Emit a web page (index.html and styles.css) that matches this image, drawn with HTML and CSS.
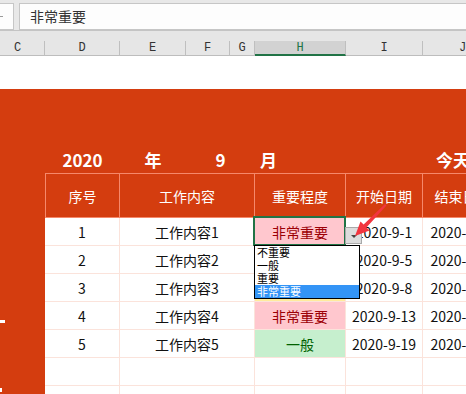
FILE: index.html
```html
<!DOCTYPE html>
<html lang="zh-CN">
<head>
<meta charset="utf-8">
<title>Sheet</title>
<link rel="stylesheet" href="styles.css">
</head>
<body>
  <div class="formula-bar">
    <div class="namebox"><span class="namebox-mark"></span></div>
    <div class="fx-input">非常重要</div>
  </div>
  <div class="col-band">
    <div class="col-head c-c">C</div>
    <div class="col-head c-d">D</div>
    <div class="col-head c-e">E</div>
    <div class="col-head c-f">F</div>
    <div class="col-head c-g">G</div>
    <div class="col-head c-h active">H</div>
    <div class="col-head c-i">I</div>
    <div class="col-head c-j">J</div>
  </div>
  <div class="blank-row"></div>
  <div class="sheet">
    <div class="spacer"></div>

    <div class="t-cell"></div>
    <div class="t-cell t-center">2020</div>
    <div class="t-cell t-center">年</div>
    <div class="t-cell t-center span2">9</div>
    <div class="t-cell t-left">月</div>
    <div class="t-cell"></div>
    <div class="t-cell t-left2">今天</div>

    <div class="h-blank"></div>
    <div class="h-cell first">序号</div>
    <div class="h-cell span3">工作内容</div>
    <div class="h-cell">重要程度</div>
    <div class="h-cell">开始日期</div>
    <div class="h-cell">结束日期</div>

    <div class="side"></div>
    <div class="d-cell">1</div>
    <div class="d-cell span3">工作内容1</div>
    <div class="d-cell imp selected"><span class="imp-fill pink">非常重要</span>
      <div class="sel-frame"></div>
      <div class="dd-button"><span class="dd-tri"></span></div>
      <div class="dd-list">
        <div class="dd-item">不重要</div>
        <div class="dd-item">一般</div>
        <div class="dd-item">重要</div>
        <div class="dd-item on">非常重要</div>
      </div>
    </div>
    <div class="d-cell">2020-9-1</div>
    <div class="d-cell">2020-9-10</div>

    <div class="side"></div>
    <div class="d-cell">2</div>
    <div class="d-cell span3">工作内容2</div>
    <div class="d-cell imp"><span class="imp-fill green"></span></div>
    <div class="d-cell">2020-9-5</div>
    <div class="d-cell">2020-9-12</div>

    <div class="side"></div>
    <div class="d-cell">3</div>
    <div class="d-cell span3">工作内容3</div>
    <div class="d-cell imp"><span class="imp-fill yellow"></span></div>
    <div class="d-cell">2020-9-8</div>
    <div class="d-cell">2020-9-15</div>

    <div class="side"><span class="mark mark-a"></span></div>
    <div class="d-cell">4</div>
    <div class="d-cell span3">工作内容4</div>
    <div class="d-cell imp"><span class="imp-fill pink">非常重要</span></div>
    <div class="d-cell">2020-9-13</div>
    <div class="d-cell">2020-9-18</div>

    <div class="side"></div>
    <div class="d-cell">5</div>
    <div class="d-cell span3">工作内容5</div>
    <div class="d-cell imp"><span class="imp-fill green">一般</span></div>
    <div class="d-cell">2020-9-19</div>
    <div class="d-cell">2020-9-25</div>

    <div class="side"></div>
    <div class="d-cell"></div>
    <div class="d-cell span3"></div>
    <div class="d-cell"></div>
    <div class="d-cell"></div>
    <div class="d-cell"></div>

    <div class="side"><span class="mark mark-b"></span></div>
    <div class="d-cell"></div>
    <div class="d-cell span3"></div>
    <div class="d-cell"></div>
    <div class="d-cell"></div>
    <div class="d-cell"></div>
  </div>

  <svg class="arrow" width="40" height="40" viewBox="350 200 40 40" aria-hidden="true">
    <polygon points="355,236 369.5,230.5 366.4,227.4 386.5,205.5 385,204 363.6,224.6 360.5,221.5" fill="#f2353f"/>
  </svg>
</body>
</html>
```
FILE: styles.css
```css
html, body {
  margin: 0;
  padding: 0;
}
body {
  width: 466px;
  height: 394px;
  overflow: hidden;
  position: relative;
  background: #ffffff;
  font-family: "Noto Sans CJK SC", "Noto Sans", sans-serif;
}

/* formula bar */
.formula-bar {
  height: 30px;
  box-sizing: border-box;
  padding-top: 3px;
  background: #e8e8e8;
  display: flex;
  gap: 5px;
}
.namebox {
  width: 14px;
  height: 27px;
  box-sizing: border-box;
  background: #fdfdfd;
  border: 1px solid #c6c6c6;
  border-left: none;
  display: flex;
  align-items: center;
}
.namebox-mark {
  display: block;
  width: 3px;
  height: 1px;
  background: #9a9a9a;
}
.fx-input {
  flex: 1;
  height: 27px;
  box-sizing: border-box;
  background: #fdfdfd;
  border: 1px solid #c6c6c6;
  border-right: none;
  padding-left: 10px;
  font-size: 14px;
  line-height: 25px;
  color: #333333;
}

/* column header band */
.col-band {
  height: 26px;
  box-sizing: border-box;
  border-top: 1px solid #c4c4c4;
  padding-top: 10px;
  background: #e6e6e6;
  display: flex;
}
.col-head {
  height: 15px;
  box-sizing: border-box;
  border-right: 1px solid #bfbfbf;
  border-bottom: 1px solid #bdbdbd;
  font-family: "Liberation Mono", "DejaVu Sans Mono", monospace;
  font-size: 12px;
  line-height: 14px;
  color: #333333;
  text-align: center;
  flex: none;
}
.c-c { width: 45px; padding-right: 9px; }
.c-d { width: 75px; }
.c-e { width: 66px; }
.c-f { width: 44px; }
.c-g { width: 25px; }
.c-h { width: 91px; }
.c-i { width: 77px; }
.c-j { width: 80px; }
.col-head.active {
  background: #d2d2d2;
  color: #217346;
  border-bottom: 2px solid #217346;
}

.blank-row {
  height: 33px;
  background: #ffffff;
}

/* sheet */
.sheet {
  display: grid;
  grid-template-columns: 45px 75px 66px 44px 25px 91px 77px 80px;
  grid-template-rows: 58px 26px 45px repeat(7, 28px);
  background: #d43d0f;
  width: 503px;
}
.spacer { grid-column: 1 / -1; }
.span2 { grid-column: span 2; }
.span3 { grid-column: span 3; }

.t-cell {
  color: #ffffff;
  font-weight: 700;
  font-size: 17px;
  line-height: 26px;
  white-space: nowrap;
}
.t-center { text-align: center; }
.t-left { padding-left: 5px; }
.t-left2 { padding-left: 13px; }

.h-cell {
  box-sizing: border-box;
  border-top: 1px solid #f6886a;
  border-bottom: 1px solid #f6886a;
  border-right: 1px solid #f6886a;
  color: #ffffff;
  font-size: 14px;
  display: flex;
  align-items: center;
  justify-content: center;
  white-space: nowrap;
}
.h-cell.first { border-left: 1px solid #f6886a; }

.side {
  display: flex;
  flex-direction: column;
}
.mark {
  display: block;
  background: #ffffff;
}
.mark-a { width: 5px; height: 3px; margin-top: 18px; }
.mark-b { width: 2px; height: 4px; margin-top: 2px; }

.d-cell {
  box-sizing: border-box;
  background: #ffffff;
  border-right: 1px solid #fbe3db;
  border-bottom: 1px solid #fbe3db;
  font-size: 14px;
  color: #111111;
  display: flex;
  align-items: center;
  justify-content: center;
  white-space: nowrap;
}
.d-cell.imp {
  align-items: stretch;
  position: relative;
}
.imp-fill {
  flex: 1;
  display: flex;
  align-items: center;
  justify-content: center;
}
.pink { background: #ffc7ce; color: #9c0006; }
.green { background: #c6efce; color: #006100; }
.yellow { background: #ffeb9c; color: #9c5700; }

.sel-frame {
  position: absolute;
  top: -2px;
  left: -2px;
  right: -1px;
  bottom: -1px;
  border: 2px solid #217346;
  z-index: 2;
}
.dd-button {
  position: absolute;
  left: 90px;
  top: 9px;
  width: 17px;
  height: 17px;
  box-sizing: border-box;
  background: #dcdcdc;
  border: 1px solid #a9a9a9;
  z-index: 3;
  display: flex;
  align-items: center;
  justify-content: center;
}
.dd-tri {
  width: 0;
  height: 0;
  border-left: 3px solid transparent;
  border-right: 3px solid transparent;
  border-top: 3px solid #444444;
  margin-top: 2px;
}
.dd-list {
  position: absolute;
  left: -1px;
  top: 27px;
  width: 106px;
  box-sizing: border-box;
  border: 1px solid #000000;
  background: #ffffff;
  z-index: 4;
}
.dd-item {
  height: 13px;
  font-size: 11px;
  line-height: 13px;
  padding-left: 2px;
  color: #000000;
  white-space: nowrap;
}
.dd-item.on {
  background: #3394f6;
  color: #ffffff;
}

.arrow {
  position: absolute;
  left: 350px;
  top: 200px;
  z-index: 6;
}
```
